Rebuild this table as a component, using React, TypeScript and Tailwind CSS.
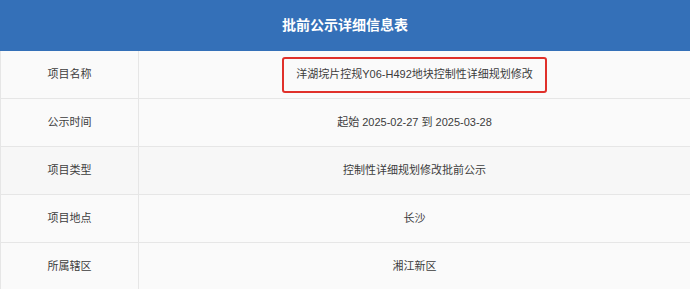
import React from "react";

const rows: { label: string; value: string; highlight?: boolean }[] = [
  { label: "项目名称", value: "洋湖垸片控规Y06-H492地块控制性详细规划修改", highlight: true },
  { label: "公示时间", value: "起始 2025-02-27 到 2025-03-28" },
  { label: "项目类型", value: "控制性详细规划修改批前公示" },
  { label: "项目地点", value: "长沙" },
  { label: "所属辖区", value: "湘江新区" },
];

export default function App() {
  return (
    <div
      className="w-[692px] h-[289px] bg-white overflow-hidden"
      style={{ fontFamily: '"Liberation Sans", "Noto Sans CJK SC", sans-serif' }}
    >
      <div className="w-[690px]">
        <div className="h-[51px] bg-[#3470b8] flex items-center justify-center text-white text-[14px] font-bold">
          批前公示详细信息表
        </div>
        {rows.map((r, i) => (
          <div
            key={r.label}
            className={`flex h-[48px] border-b border-l border-[#e6e6e6] text-[11px] text-[#3c3c3c] ${
              i === 2 ? "bg-[#f7f7f7]" : "bg-[#fafafa]"
            }`}
          >
            <div className="w-[138px] border-r border-[#e6e6e6] flex items-center justify-center">
              {r.label}
            </div>
            <div className="flex-1 flex items-center justify-center">
              {r.highlight ? (
                <span className="border-2 border-[#e0302a] rounded-[3px] px-[12px] h-[36px] flex items-center">
                  {r.value}
                </span>
              ) : (
                r.value
              )}
            </div>
          </div>
        ))}
      </div>
    </div>
  );
}
